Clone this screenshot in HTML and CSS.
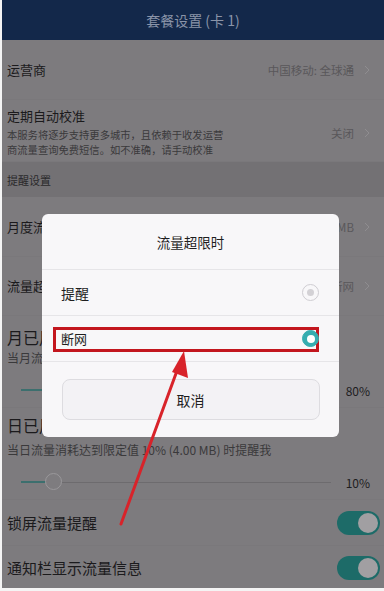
FILE: index.html
```html
<!DOCTYPE html>
<html lang="zh">
<head>
<meta charset="utf-8">
<link rel="stylesheet" href="styles.css">
</head>
<body>
<div class="page">
  <div class="screen">
    <div class="header">套餐设置 (卡 1)</div>

    <div class="row r-carrier">
      <div class="title">运营商</div>
      <div class="value">中国移动: 全球通 <svg class="chev" viewBox="0 0 6 10"><polyline points="1,1 5,5 1,9"/></svg></div>
    </div>

    <div class="row r-calib">
      <div class="col">
        <div class="title">定期自动校准</div>
        <div class="sub">本服务将逐步支持更多城市，且依赖于收发运营<br>商流量查询免费短信。如不准确，请手动校准</div>
      </div>
      <div class="value">关闭 <svg class="chev" viewBox="0 0 6 10"><polyline points="1,1 5,5 1,9"/></svg></div>
    </div>

    <div class="section">提醒设置</div>

    <div class="row r-std">
      <div class="title">月度流量套餐</div>
      <div class="value">MB <svg class="chev" viewBox="0 0 6 10"><polyline points="1,1 5,5 1,9"/></svg></div>
    </div>

    <div class="row r-std r-std2">
      <div class="title">流量超限时</div>
      <div class="value">断网 <svg class="chev" viewBox="0 0 6 10"><polyline points="1,1 5,5 1,9"/></svg></div>
    </div>

    <div class="row r-slider">
      <div class="col">
        <div class="title big">月已用流量提醒</div>
        <div class="sub s2">当月流量消耗达到限定值 80% 时提醒我</div>
        <div class="slider-line">
          <div class="track"><div class="fill" style="width:80%"></div><div class="thumb" style="left:80%"></div></div>
          <div class="pct">80%</div>
        </div>
      </div>
    </div>

    <div class="row r-slider r-slider2">
      <div class="col">
        <div class="title big">日已用流量提醒</div>
        <div class="sub s2">当日流量消耗达到限定值 10% (4.00 MB) 时提醒我</div>
        <div class="slider-line">
          <div class="track"><div class="fill" style="width:10.5%"></div><div class="thumb" style="left:10.5%"></div></div>
          <div class="pct">10%</div>
        </div>
      </div>
    </div>

    <div class="row r-toggle">
      <div class="title mid">锁屏流量提醒</div>
      <div class="toggle"><div class="knob"></div></div>
    </div>

    <div class="row r-toggle last">
      <div class="title mid">通知栏显示流量信息</div>
      <div class="toggle"><div class="knob"></div></div>
    </div>

    <div class="dialog">
      <div class="d-title">流量超限时</div>
      <div class="d-opt">
        <span>提醒</span>
        <span class="radio"></span>
      </div>
      <div class="d-opt sel">
        <span>断网</span>
        <span class="radio on"></span>
      </div>
      <div class="d-foot">
        <div class="btn">取消</div>
      </div>
    </div>

    <svg class="arrow" viewBox="0 0 384 591" width="384" height="591">
      <line x1="121" y1="524" x2="178" y2="368" stroke="#d8232a" stroke-width="3" stroke-linecap="round"/>
      <polygon points="184,351 188,378 172,372" fill="#d8232a"/>
    </svg>
  </div>
</div>
</body>
</html>
```

FILE: styles.css
```css
html, body {
  margin: 0;
  padding: 0;
}
body {
  width: 384px;
  height: 591px;
  overflow: hidden;
  background: #f4f4f4;
  font-family: "Noto Sans CJK SC", "Noto Sans", sans-serif;
}
.page {
  width: 384px;
  height: 591px;
  padding: 0 0 3px 2px;
  box-sizing: border-box;
}
.screen {
  position: relative;
  height: 100%;
  background: #7d7b7e;
  overflow: hidden;
  color: #1b1a1c;
}
.header {
  height: 40px;
  background: #13284a;
  color: #8a94a8;
  font-size: 14px;
  display: flex;
  align-items: center;
  justify-content: center;
}
.row {
  display: flex;
  align-items: center;
  justify-content: space-between;
  padding: 0 14px 0 5px;
  box-sizing: border-box;
  border-bottom: 1px solid #7a787b;
}
.title {
  font-size: 13px;
  line-height: 18px;
}
.title.big {
  font-size: 16px;
  line-height: 18px;
}
.title.mid {
  font-size: 15px;
  line-height: 20px;
}
.value {
  display: flex;
  align-items: center;
  gap: 10px;
  font-size: 11.5px;
  color: #59575a;
}
.chev {
  width: 6px;
  height: 10px;
  fill: none;
  stroke: #8f8d90;
  stroke-width: 1;
}
.r-carrier {
  height: 60px;
}
.r-calib {
  height: 62px;
  align-items: center;
}
.r-calib .col {
  padding-top: 2px;
}
.r-calib .value {
  padding-top: 5px;
}
.sub {
  font-size: 10.3px;
  line-height: 15px;
  color: #3a393b;
  margin-top: 2px;
}
.section {
  height: 35px;
  background: #737174;
  font-size: 11px;
  color: #2a292b;
  display: flex;
  align-items: center;
  padding-left: 5px;
}
.r-std {
  height: 60px;
}
.r-std2 {
  height: 59px;
}
.r-slider {
  height: 92px;
  align-items: flex-start;
}
.r-slider .col {
  width: 100%;
  padding-top: 12px;
}
.r-slider2 .col {
  padding-top: 8px;
}
.sub.s2 {
  font-size: 12px;
  line-height: 16px;
  margin-top: 4px;
}
.r-slider2 .sub.s2 {
  margin-top: 8px;
}
.slider-line {
  display: flex;
  align-items: center;
  margin-top: 14px;
  height: 20px;
}
.track {
  position: relative;
  margin-left: 14px;
  width: 310px;
  height: 1px;
  background: #6d6b6e;
}
.fill {
  position: absolute;
  left: 0;
  top: -0.5px;
  height: 1.5px;
  background: #3c6f6e;
}
.thumb {
  position: absolute;
  top: -9px;
  width: 17px;
  height: 17px;
  margin-left: -9px;
  border-radius: 50%;
  background: #7e7c7f;
  border: 1px solid #9a989b;
  box-sizing: border-box;
}
.pct {
  margin-left: auto;
  font-size: 12px;
  color: #1e1d1f;
  margin-right: 0;
}
.r-toggle {
  height: 46px;
  padding-right: 4px;
}
.r-toggle.last {
  height: 44px;
  border-bottom: none;
}
.toggle {
  width: 43px;
  height: 24px;
  border-radius: 12px;
  background: #1d6b68;
  position: relative;
}
.knob {
  position: absolute;
  right: 2px;
  top: 2px;
  width: 20px;
  height: 20px;
  border-radius: 50%;
  background: #a19fa2;
}
.dialog {
  position: absolute;
  left: 40px;
  top: 214px;
  width: 297px;
  height: 223px;
  background: #f8f7f9;
  border-radius: 6px;
  display: flex;
  flex-direction: column;
}
.d-title {
  height: 55px;
  display: flex;
  align-items: center;
  justify-content: center;
  font-size: 13.5px;
  color: #1e1e1e;
  border-bottom: 1px solid #e6e5e8;
}
.d-opt {
  height: 46px;
  display: flex;
  align-items: center;
  justify-content: space-between;
  padding: 0 20px 0 19px;
  font-size: 14px;
  color: #1e1e1e;
  border-bottom: 1px solid #e6e5e8;
  box-sizing: border-box;
}
.d-opt.sel {
  position: relative;
  font-size: 13px;
}
.d-opt.sel::before {
  content: "";
  position: absolute;
  left: 11px;
  top: 11px;
  width: 266px;
  height: 25px;
  border: 3px solid #c3161e;
  box-sizing: border-box;
}
.radio {
  width: 17px;
  height: 17px;
  border-radius: 50%;
  border: 1px solid #cfcdd2;
  box-sizing: border-box;
  display: flex;
  align-items: center;
  justify-content: center;
}
.radio::after {
  content: "";
  width: 7px;
  height: 7px;
  border-radius: 50%;
  background: #d3d1d5;
}
.radio.on {
  background: #36adb0;
  border-color: #36adb0;
  position: relative;
  z-index: 1;
}
.radio.on::after {
  width: 8px;
  height: 8px;
  background: #ffffff;
}
.d-foot {
  flex: 1;
  display: flex;
  align-items: flex-start;
  justify-content: center;
  padding-top: 17px;
}
.btn {
  width: 258px;
  height: 41px;
  border-radius: 8px;
  border: 1px solid #dddce0;
  background: #f3f2f5;
  box-sizing: border-box;
  display: flex;
  align-items: center;
  justify-content: center;
  font-size: 14px;
  color: #1e1e1e;
}
.arrow {
  position: absolute;
  left: -2px;
  top: 0;
  pointer-events: none;
}
```
